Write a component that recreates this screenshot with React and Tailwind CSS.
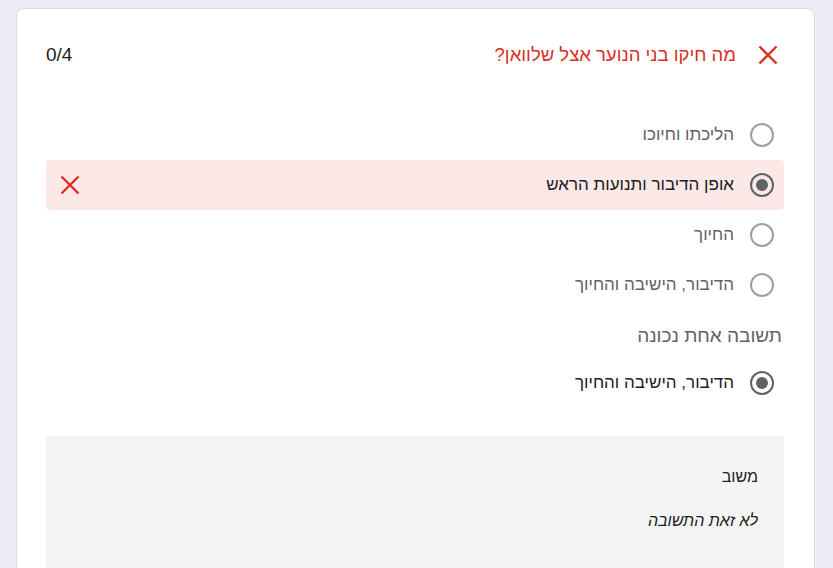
import React from 'react'

const XIcon = ({ className }) => (
  <svg viewBox="0 0 24 24" className={className} fill="none" stroke="currentColor" strokeWidth="2.4">
    <path d="M3.5 3.5L20.5 20.5M20.5 3.5L3.5 20.5" />
  </svg>
)

const Radio = ({ checked }) => (
  <div className={`w-6 h-6 rounded-full border-2 flex items-center justify-center shrink-0 ${checked ? 'border-[#5f6368]' : 'border-[#9aa0a6]'}`}>
    {checked && <div className="w-3 h-3 rounded-full bg-[#5f6368]" />}
  </div>
)

const options = [
  { text: 'הליכתו וחיוכו' },
  { text: 'אופן הדיבור ותנועות הראש', checked: true, wrong: true },
  { text: 'החיוך' },
  { text: 'הדיבור, הישיבה והחיוך' },
]

export default function App() {
  return (
    <div dir="rtl" className="h-[568px] overflow-hidden bg-[#f0ebf8] pt-2 pr-[18px] font-['Liberation_Sans',sans-serif]">
      <div className="w-[799px] bg-white border border-[#dadce0] rounded-lg pr-[30px] pl-[29px] pt-[33px] h-[600px]">
        <div className="flex items-center justify-between h-[26px]">
          <div className="flex items-center gap-[20px] pr-[4px]">
            <XIcon className="w-6 h-6 text-[#d93025]" />
            <span className="text-[18.5px] text-[#d93025]">מה חיקו בני הנוער אצל שלוואן?</span>
          </div>
          <span className="text-[19px] text-[#202124]">0/4</span>
        </div>

        <div className="mt-[42px] flex flex-col">
          {options.map((o, i) => (
            <div key={i} className={`h-[50px] flex items-center justify-between pr-[10px] pl-3 rounded ${o.wrong ? 'bg-[#fce8e6]' : ''}`}>
              <div className="flex items-center gap-4">
                <Radio checked={o.checked} />
                <span className={`text-[17px] ${o.checked ? 'text-[#202124]' : 'text-[#5f6368]'}`}>{o.text}</span>
              </div>
              {o.wrong && <XIcon className="w-6 h-6 text-[#d93025]" />}
            </div>
          ))}
        </div>

        <div className="mt-[14px] pr-[2px] text-[19px] text-[#5f6368] h-[24px] leading-[24px]">תשובה אחת נכונה</div>

        <div className="mt-[10px] h-[50px] flex items-center gap-4 pr-[10px]">
          <Radio checked />
          <span className="text-[17px] text-[#202124]">הדיבור, הישיבה והחיוך</span>
        </div>

        <div className="mt-[28px] bg-[#f4f4f4] pr-[26px] pl-6 pt-[30px] h-[200px]">
          <div className="text-[16px] text-[#202124] leading-[22px]">משוב</div>
          <div className="mt-[22px] text-[16px] italic text-[#202124] leading-[22px]">לא זאת התשובה</div>
        </div>
      </div>
    </div>
  )
}
